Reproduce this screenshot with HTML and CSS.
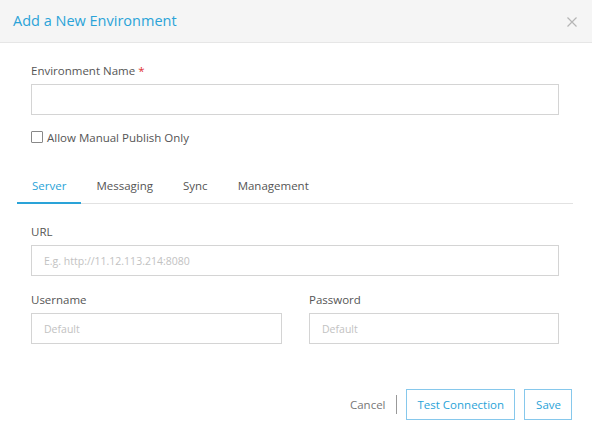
FILE: index.html
```html
<!DOCTYPE html>
<html lang="en">
<head>
<meta charset="utf-8">
<title>Add a New Environment</title>
<link rel="stylesheet" href="styles.css">
</head>
<body>
<div class="modal">
  <header class="modal-header">
    <h1 class="modal-title">Add a New Environment</h1>
    <button class="close" type="button" aria-label="Close">
      <svg width="10" height="10" viewBox="0 0 10 10"><path d="M0.5 0.5 L9.5 9.5 M9.5 0.5 L0.5 9.5" stroke="#b5b5b5" stroke-width="1.2" fill="none"/></svg>
    </button>
  </header>
  <div class="modal-body">
    <div class="field">
      <label class="label">Environment Name <span class="req">*</span></label>
      <input class="input" type="text">
    </div>
    <label class="check"><span class="box"></span>Allow Manual Publish Only</label>
    <nav class="tabs">
      <span class="tab active">Server</span>
      <span class="tab">Messaging</span>
      <span class="tab">Sync</span>
      <span class="tab">Management</span>
    </nav>
    <div class="panel">
      <div class="field">
        <label class="label">URL</label>
        <input class="input" type="text" placeholder="E.g. http://11.12.113.214:8080">
      </div>
      <div class="row">
        <div class="field">
          <label class="label">Username</label>
          <input class="input" type="text" placeholder="Default">
        </div>
        <div class="field">
          <label class="label">Password</label>
          <input class="input" type="text" placeholder="Default">
        </div>
      </div>
    </div>
  </div>
  <footer class="modal-footer">
    <span class="cancel">Cancel</span>
    <span class="divider"></span>
    <button class="btn" type="button">Test Connection</button>
    <button class="btn" type="button">Save</button>
  </footer>
</div>
</body>
</html>
```
FILE: styles.css
```css
* { box-sizing: border-box; }
html, body { margin: 0; padding: 0; background: #fff; }
body {
  font-family: "Open Sans", "Noto Sans", sans-serif;
  font-size: 11.5px;
  color: #555;
}
.modal { width: 592px; height: 433px; background: #fff; }
.modal-header {
  height: 43px;
  background: #f5f5f5;
  border-bottom: 1px solid #e6e6e6;
  display: flex;
  align-items: center;
  justify-content: space-between;
  padding: 0 15px 1px 13px;
}
.modal-title {
  margin: 0;
  font-size: 14.5px;
  font-weight: 400;
  color: #2aa3d8;
}
.close {
  border: 0;
  background: transparent;
  padding: 0;
  margin-top: 2px;
  display: flex;
}
.modal-body { padding: 20px 33px 0 31px; }
.field { display: flex; flex-direction: column; }
.label { line-height: 16px; margin-bottom: 5px; color: #555; }
.req { color: #e03030; }
.input {
  height: 31px;
  border: 1px solid #d4d4d4;
  border-radius: 0;
  padding: 0 12px;
  font-family: inherit;
  font-size: 10.5px;
  color: #555;
  outline: none;
}
.input::placeholder { color: #c2c2c2; }
.check {
  display: flex;
  align-items: center;
  margin-top: 15px;
  line-height: 16px;
  color: #555;
}
.box {
  width: 12px;
  height: 12px;
  border: 1px solid #888;
  border-radius: 1px;
  margin-right: 4px;
  margin-top: -2px;
}
.tabs {
  display: flex;
  margin: 22px -14px 0 -14px;
  border-bottom: 1px solid #e2e2e2;
}
.tab {
  padding: 10px 15px 8px;
  line-height: 16px;
  border-bottom: 2px solid transparent;
  margin-bottom: -1px;
  color: #555;
}
.tab.active { color: #2aa3d8; border-bottom-color: #2aa3d8; }
.panel { padding-top: 20px; }
.row {
  display: grid;
  grid-template-columns: 251px 250px;
  column-gap: 27px;
  margin-top: 16px;
}
.modal-footer {
  display: flex;
  justify-content: flex-end;
  align-items: center;
  padding: 0 20px;
  margin-top: 45px;
}
.cancel { color: #777; line-height: 16px; }
.divider {
  width: 1px;
  height: 19px;
  background: #999;
  margin: 0 9px 0 10px;
}
.btn {
  height: 31px;
  padding: 0 10px 0 11px;
  border: 1px solid #86c8ec;
  background: #fff;
  color: #2aa3d8;
  font-family: inherit;
  font-size: 11.5px;
  border-radius: 0;
}
.btn + .btn { margin-left: 9px; }
```
